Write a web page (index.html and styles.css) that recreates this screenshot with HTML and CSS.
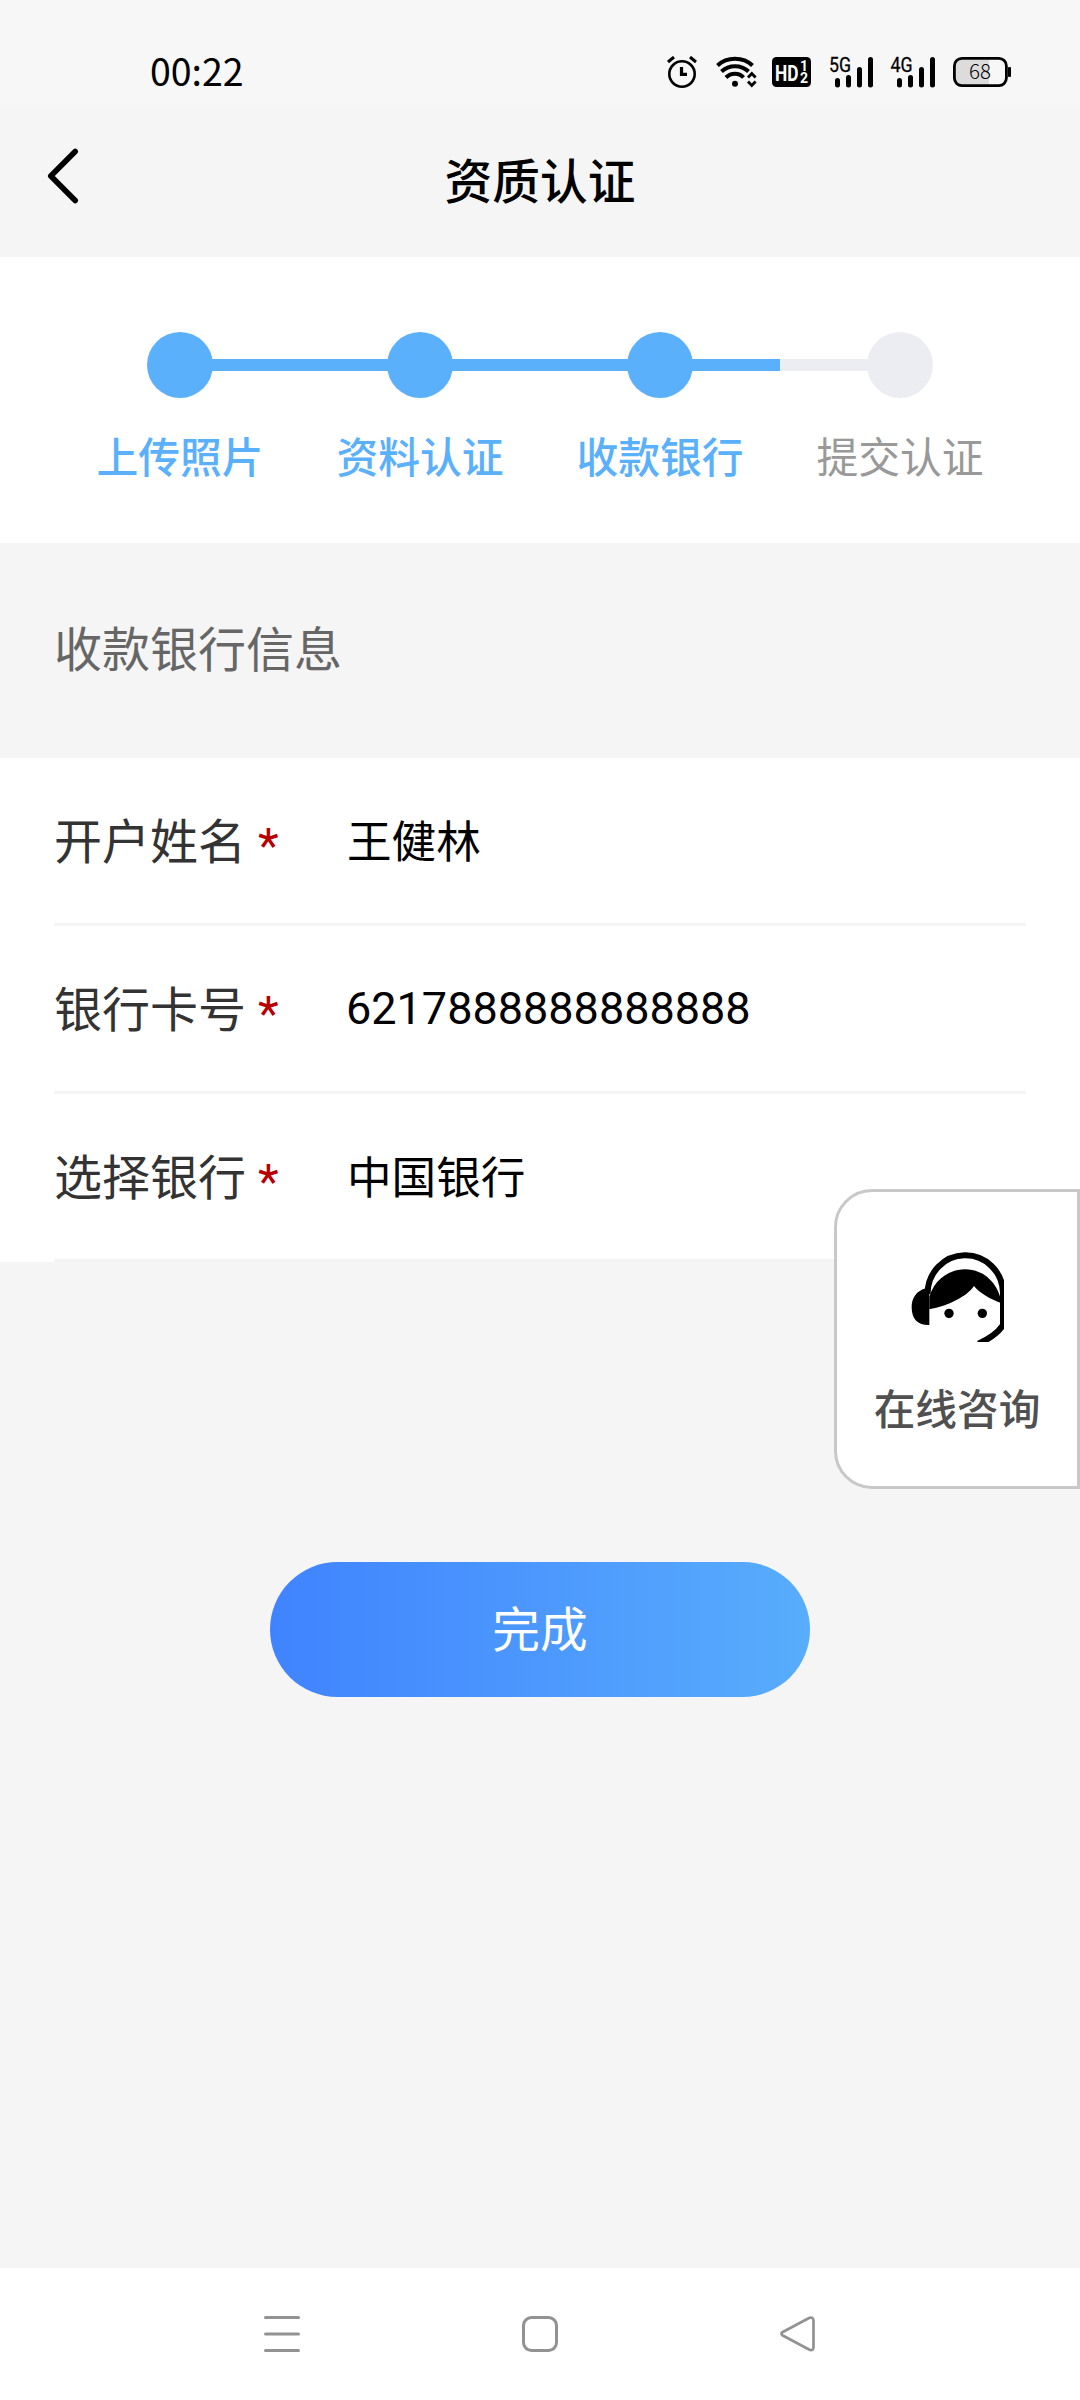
FILE: index.html
```html
<!DOCTYPE html>
<html lang="zh-CN">
<head>
<meta charset="utf-8">
<title>资质认证</title>
<link rel="stylesheet" href="styles.css">
</head>
<body>
<div class="screen">
  <div class="status">
    <span class="time">00:22</span>
    <div class="status-icons">
      <svg width="30" height="33" viewBox="667 56 30 33" fill="none" stroke="#000">
        <circle cx="682" cy="74" r="12.7" stroke-width="2.6"/>
        <path d="M668 62l6-5M696 62l-6-5" stroke-width="3"/>
        <path d="M681.5 67v7.3h5.5" stroke-width="3.2"/>
      </svg>
      <svg class="wifi" width="42" height="33" viewBox="716 56 42 33" fill="none" stroke="#000">
        <path d="M717.500 65.500C727 56.500 743 56.500 752.500 65.500M721.500 71.500C729 64.500 741 64.500 748.500 71.500M726 77.500C731 72.500 739 72.500 743.500 77.500" stroke-width="4"/>
        <circle cx="735" cy="83.800" r="3" fill="#000" stroke="none"/>
        <path d="M748 77.500l3.800-4 3.800 4M748 81.500l3.800 4 3.800-4" stroke-width="2.800"/>
      </svg>
      <svg class="hd" width="39" height="33" viewBox="772 56 39 33" font-family="Roboto, sans-serif" font-weight="700" fill="#fff">
        <rect x="772" y="57" width="39" height="30" rx="4.500" fill="#000"/>
        <text x="775" y="80.500" font-size="22" textLength="23.500" lengthAdjust="spacingAndGlyphs">HD</text>
        <text x="800" y="71" font-size="14">1</text>
        <text x="800" y="82.500" font-size="14">2</text>
      </svg>
      <svg class="net" width="48" height="43" viewBox="826 46 48 43">
        <text class="net-text" x="829" y="71.500" textLength="22" lengthAdjust="spacingAndGlyphs">5G</text>
        <path d="M837.500 80.500v4.500M848.500 77.500v7.500M859.500 69.500v15.500M870.500 59.500v25.500" stroke="#000" stroke-width="5" stroke-linecap="round"/>
      </svg>
      <svg class="net2" width="48" height="43" viewBox="826 46 48 43">
        <text class="net-text" x="828.500" y="71.500" textLength="22" lengthAdjust="spacingAndGlyphs">4G</text>
        <path d="M837.500 80.500v4.500M848.500 77.500v7.500M859.500 69.500v15.500M870.500 59.500v25.500" stroke="#000" stroke-width="5" stroke-linecap="round"/>
      </svg>
      <svg class="battery" width="58" height="33" viewBox="953 56 58 33">
        <path d="M962 60h27v25h-27c-5 0-7-2-7-6V66c0-4 2-6 7-6z" fill="#dcdcdc"/>
        <rect x="954.400" y="58.400" width="52" height="27.200" rx="7.500" fill="none" stroke="#000" stroke-width="2.800"/>
        <rect x="1008" y="67" width="3" height="10" rx="1" fill="#000"/>
        <text x="980" y="79" text-anchor="middle" font-family="Noto Sans CJK SC, sans-serif" font-weight="300" font-size="20.500">68</text>
      </svg>
    </div>
  </div>

  <header class="header">
    <svg class="back" width="32" height="56" viewBox="47 148 32 56" fill="none" stroke="#000" stroke-width="5.600" stroke-linecap="round" stroke-linejoin="round"><path d="M75.200 151.500L50.800 176l24.400 24.500"/></svg>
    <h1 class="title">资质认证</h1>
  </header>

  <ol class="steps">
    <li class="step done"><span class="track"><i class="dot"></i></span><span class="step-label">上传照片</span></li>
    <li class="step done"><span class="track"><i class="dot"></i></span><span class="step-label">资料认证</span></li>
    <li class="step done"><span class="track"><i class="dot"></i></span><span class="step-label">收款银行</span></li>
    <li class="step"><span class="track"><i class="dot"></i></span><span class="step-label">提交认证</span></li>
  </ol>

  <h2 class="section">收款银行信息</h2>

  <div class="form">
    <div class="row"><span class="label">开户姓名 <b class="req">*</b></span><span class="value">王健林</span></div>
    <div class="row"><span class="label">银行卡号 <b class="req">*</b></span><span class="value number">6217888888888888</span></div>
    <div class="row"><span class="label">选择银行 <b class="req">*</b></span><span class="value">中国银行</span></div>
  </div>

  <main class="actions"><button class="submit">完成</button></main>

  <nav class="nav">
    <svg width="36" height="36" viewBox="0 0 36 36" stroke="#929292" stroke-width="3" stroke-linecap="round"><path d="M1.500 1.500h33M1.500 18h33M1.500 34.500h33"/></svg>
    <svg width="36" height="36" viewBox="0 0 36 36" fill="none" stroke="#929292" stroke-width="3"><rect x="1.500" y="1.500" width="33" height="33" rx="8"/></svg>
    <svg width="36" height="36" viewBox="0 0 36 36" fill="none" stroke="#929292" stroke-width="2.700"><path d="M2.800 16L29 2Q33.300 .5 33.500 4.500V31Q33.300 35.500 29 33.500L2.800 19.500Q0 17.700 2.800 16z"/></svg>
  </nav>

  <aside class="consult">
    <svg width="94" height="92" viewBox="270 240 282 276">
      <path d="M323 372A113 114 0 0 1 549 368V466Q525 500 475 521" fill="none" stroke="#000" stroke-width="18"/>
      <path d="M328 418V380C345 325 390 298 435 298C487 298 532 332 546 400C510 387 480 370 462 348C440 380 385 407 328 418Z"/>
      <path d="M318 355C290 362 274 384 275 414C276 448 294 466 328 465V355Z"/>
      <circle cx="387" cy="430" r="14"/><circle cx="487" cy="430" r="14"/>
    </svg>
    <span class="consult-label">在线咨询</span>
  </aside>
</div>
</body>
</html>
```
FILE: styles.css
```css
* { box-sizing: border-box; }

body {
  margin: 0;
  background: #f5f5f5;
  color: #000;
  font-family: Roboto, "Noto Sans CJK SC", sans-serif;
}

.screen {
  position: relative;
  display: flex;
  flex-direction: column;
  width: 1080px;
  height: 2400px;
  overflow: hidden;
}

svg { display: block; flex: none; }

.status {
  display: flex;
  justify-content: space-between;
  height: 107px;
  padding: 0 69px 0 150px;
  background: #f7f7f7;
}

.time {
  padding-top: 43px;
  font: 400 37.5px/54px "Noto Sans CJK SC", sans-serif;
}

.status-icons { display: flex; padding-top: 56px; }
.wifi { margin-left: 19px; }
.hd { margin-left: 14px; }
.net { margin: -10px 0 0 15px; }
.net2 { margin: -10px 0 0 14px; }
.battery { margin-left: 17px; }
.net-text { font: 400 20px Roboto, sans-serif; stroke: #000; stroke-width: .3px; }

.header {
  display: grid;
  grid-template-columns: 79px 1fr 79px;
  height: 150px;
}

.back { margin: 41px 0 0 47px; }

.title {
  margin: 0;
  text-align: center;
  font-size: 47.7px;
  font-weight: 500;
  line-height: 152px;
}

.steps {
  display: flex;
  height: 286px;
  margin: 0;
  padding: 75px 60px 0;
  background: #fff;
  list-style: none;
}

.step { width: 240px; color: #999; text-align: center; }

.track {
  display: flex;
  align-items: center;
  justify-content: center;
  height: 66px;
  background: linear-gradient(#ecedf3, #ecedf3) left center / 50% 12px no-repeat;
}

.dot { width: 66px; height: 66px; border-radius: 50%; background: #ecedf3; }

.done { color: #5bb0fb; font-weight: 500; }
.done .dot { background: #5bb0fb; }
.done .track { background: linear-gradient(#5bb0fb, #5bb0fb) center / 100% 12px no-repeat; }
.done:first-child .track { background-position: right center; background-size: 50% 12px; }

.step-label { display: block; margin-top: 31px; font-size: 41.8px; line-height: 60px; }

.section {
  height: 215px;
  margin: 0;
  padding-left: 54px;
  color: #666;
  font-size: 48px;
  font-weight: 400;
  line-height: 216px;
}

.form {
  padding: 0 54px;
  background: linear-gradient(#f5f5f5, #f5f5f5) right bottom / 54px 3px no-repeat #fff;
}

.row {
  display: flex;
  height: 168px;
  border-bottom: 3px solid #f4f4f4;
  line-height: 171px;
}

.label { width: 293px; color: #333; font-size: 48px; line-height: 169px; }
.req { color: #b80000; font-weight: 400; line-height: 0; vertical-align: -3px; }
.value { font-size: 44.6px; }
.number { margin-left: -1px; font-size: 45px; line-height: 165px; }

.actions { flex: 1; padding: 300px 270px 0; }

.submit {
  display: block;
  width: 540px;
  height: 135px;
  padding: 0 0 7px;
  border: 0;
  border-radius: 68px;
  background: linear-gradient(90deg, #4083ff, #58adfc);
  color: #fff;
  font: inherit;
  font-size: 47.7px;
}

.nav {
  display: flex;
  justify-content: space-between;
  align-items: center;
  height: 132px;
  padding: 0 264px;
  background: #fff;
}

.consult {
  position: absolute;
  top: 1189px;
  right: 0;
  display: flex;
  flex-direction: column;
  align-items: center;
  width: 246px;
  height: 300px;
  padding-top: 58px;
  border: 3px solid #c8c8c8;
  border-radius: 38px 0 0 38px;
  background: #fff;
}

.consult-label {
  margin-top: 39px;
  color: #505050;
  font-size: 41.7px;
  font-weight: 500;
  line-height: 60px;
}
```
